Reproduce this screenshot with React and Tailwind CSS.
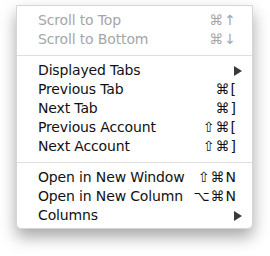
import React from "react";

const Arrow = () => (
  <svg width="8" height="10" viewBox="0 0 8 10" className="block">
    <path d="M0 0 L8 5 L0 10 Z" fill="#3a3a3a" />
  </svg>
);

function Item({ label, sc, disabled, sub }) {
  return (
    <div
      className={`flex h-[19px] items-center justify-between pl-[21px] pr-[15px] ${
        disabled ? "text-[#a6a6a6]" : "text-[#111]"
      }`}
    >
      <span className="tracking-[-0.15px]">{label}</span>
      {sub ? (
        <span className="mr-[-5px]">
          <Arrow />
        </span>
      ) : (
        <span className="tracking-[1px]">{sc}</span>
      )}
    </div>
  );
}

const Sep = () => <div className="mt-[6px] mb-[5px] h-px bg-[#dedede]" />;

export default function App() {
  return (
    <div className="h-[256px] w-[270px] bg-white pl-[16px] pt-[5px]">
      <div
        className="w-[237px] rounded-b-[5px] border border-[#d6d6d6] bg-white pt-[5px] pb-[3px] text-[14px] leading-[19px] shadow-[0_8px_16px_rgba(0,0,0,0.35)]"
        style={{ fontFamily: '"DejaVu Sans", sans-serif' }}
      >
        <Item label="Scroll to Top" sc="⌘↑" disabled />
        <Item label="Scroll to Bottom" sc="⌘↓" disabled />
        <Sep />
        <Item label="Displayed Tabs" sub />
        <Item label="Previous Tab" sc="⌘[" />
        <Item label="Next Tab" sc="⌘]" />
        <Item label="Previous Account" sc="⇧⌘[" />
        <Item label="Next Account" sc="⇧⌘]" />
        <Sep />
        <Item label="Open in New Window" sc="⇧⌘N" />
        <Item label="Open in New Column" sc="⌥⌘N" />
        <Item label="Columns" sub />
      </div>
    </div>
  );
}
